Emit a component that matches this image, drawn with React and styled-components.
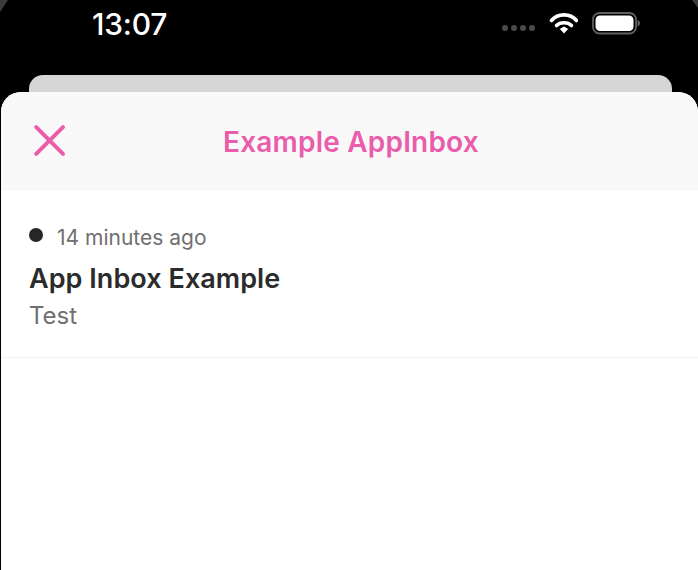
import React from 'react'
import styled, { createGlobalStyle } from 'styled-components'

const GlobalStyle = createGlobalStyle`
  html, body {
    margin: 0;
    height: 100%;
    background: #000;
    overflow: hidden;
  }
  #root {
    height: 100%;
  }
`

const Screen = styled.div`
  position: relative;
  width: 698px;
  height: 570px;
  display: flex;
  flex-direction: column;
  background: #000;
  font-family: Inter, 'Liberation Sans', sans-serif;
  overflow: hidden;
`

// bit of the device frame showing in the top corners
const FrameCorner = styled.div`
  position: absolute;
  top: 0;
  ${p => (p.$right ? 'right: 0;' : 'left: 0;')}
  width: ${p => (p.$right ? 6 : 8)}px;
  height: ${p => (p.$right ? 8 : 12)}px;
  background: #3a3a3a;
  clip-path: ${p => (p.$right ? 'polygon(0 0, 100% 0, 100% 100%)' : 'polygon(0 0, 100% 0, 0 100%)')};
`

const StatusBar = styled.div`
  flex: none;
  box-sizing: border-box;
  height: 75px;
  padding: 6px 58px 0 92px;
  display: flex;
  align-items: flex-start;
  justify-content: space-between;
`

const Clock = styled.span`
  color: #fff;
  font-size: 30px;
  line-height: 37px;
  font-weight: 500;
  letter-spacing: -0.2px;
`

const StatusIcons = styled.div`
  display: flex;
  align-items: center;
  gap: 14px;
  margin-top: 6px;
`

const Dots = styled.div`
  display: flex;
  gap: 3px;
  margin-top: 8px;
  margin-right: -1px;
`

const Dot = styled.i`
  display: block;
  width: 6px;
  height: 6px;
  border-radius: 50%;
  background: #4a4a4a;
`

const BackCard = styled.div`
  flex: none;
  height: 17px;
  margin: 0 26px 0 29px;
  background: #d6d6d6;
  border-radius: 14px 14px 0 0;
`

const Sheet = styled.div`
  flex: 1;
  margin-left: 1px;
  display: flex;
  flex-direction: column;
  background: #fff;
  border-radius: 20px 20px 0 0;
  overflow: hidden;
`

const Header = styled.header`
  flex: none;
  position: relative;
  box-sizing: border-box;
  height: 98px;
  display: flex;
  align-items: center;
  justify-content: center;
  background: #f9f9f9;
  border-bottom: 1px solid #f3f3f3;
`

const CloseButton = styled.button`
  position: absolute;
  left: 31px;
  top: 32px;
  width: 34px;
  height: 34px;
  padding: 0;
  border: 0;
  background: none;
  display: block;
`

const Title = styled.h1`
  margin: 3px 0 0 3px;
  color: #e95dac;
  font-size: 28px;
  line-height: 34px;
  font-weight: 600;
  letter-spacing: 0.2px;
`

const Message = styled.div`
  box-sizing: border-box;
  height: 168px;
  padding: 31px 29px 0 27px;
  border-bottom: 1px solid #f3f3f3;
`

const Meta = styled.div`
  display: flex;
  align-items: center;
  gap: 14px;
  height: 32px;
`

const UnreadDot = styled.span`
  flex: none;
  width: 14px;
  height: 14px;
  margin: -4px 0 0 1px;
  border-radius: 50%;
  background: #262626;
`

const Time = styled.span`
  margin-top: 2px;
  color: #707070;
  font-size: 21px;
  line-height: 32px;
`

const MessageTitle = styled.h2`
  margin: 5px 0 0 1px;
  color: #2b2b2b;
  font-size: 27px;
  line-height: 41px;
  font-weight: 600;
  letter-spacing: 0.05px;
`

const MessageBody = styled.p`
  margin: 0 0 0 1px;
  color: #707070;
  font-size: 24px;
  line-height: 33px;
`

const Glyph = styled.svg`
  display: block;
`

const WifiIcon = () => (
  <Glyph width="30" height="24" viewBox="0 0 30 24" fill="none">
    <path d="M3.5 8.5C10 1 22 1 28.5 8.5" stroke="#fff" strokeWidth="3.6" strokeLinecap="round" />
    <path d="M8.5 13.5C12 9.8 20 9.8 23.5 13.5" stroke="#fff" strokeWidth="3.6" strokeLinecap="round" />
    <path d="M11.8 17L16 14.6L20.2 17L16 21.5Z" fill="#fff" />
  </Glyph>
)

const BatteryIcon = () => (
  <Glyph width="48" height="24" viewBox="0 0 48 24" fill="none">
    <rect x="1" y="1" width="43" height="20.5" rx="6.5" stroke="#5f5f5f" strokeWidth="1.8" />
    <rect x="3.5" y="3.5" width="38" height="15.5" rx="4.5" fill="#fff" />
    <path d="M45.5 8C47 8.5 48 9.6 48 11.2C48 12.8 47 13.9 45.5 14.4Z" fill="#5f5f5f" />
  </Glyph>
)

const CloseIcon = () => (
  <Glyph width="34" height="34" viewBox="0 0 34 34" fill="none">
    <path d="M4.2 3.2L31 29.8M31 3.2L4.2 29.8" stroke="#e95dac" strokeWidth="4" strokeLinecap="round" />
  </Glyph>
)

export default function App() {
  return (
    <Screen>
      <GlobalStyle />
      <FrameCorner />
      <FrameCorner $right />
      <StatusBar>
        <Clock>13:07</Clock>
        <StatusIcons>
          <Dots>
            <Dot />
            <Dot />
            <Dot />
            <Dot />
          </Dots>
          <WifiIcon />
          <BatteryIcon />
        </StatusIcons>
      </StatusBar>
      <BackCard />
      <Sheet>
        <Header>
          <CloseButton aria-label="Close">
            <CloseIcon />
          </CloseButton>
          <Title>Example AppInbox</Title>
        </Header>
        <Message>
          <Meta>
            <UnreadDot />
            <Time>14 minutes ago</Time>
          </Meta>
          <MessageTitle>App Inbox Example</MessageTitle>
          <MessageBody>Test</MessageBody>
        </Message>
      </Sheet>
    </Screen>
  )
}
